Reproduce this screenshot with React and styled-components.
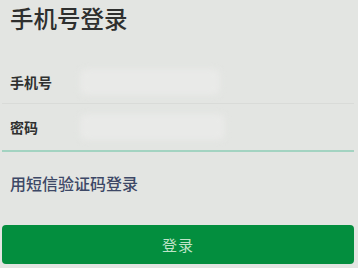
import React from 'react';
import styled, { createGlobalStyle } from 'styled-components';

const GlobalStyle = createGlobalStyle`
  html, body {
    margin: 0;
    padding: 0;
    background-color: #e3e5e2;
  }
  body {
    font-family: "Noto Sans CJK SC", "Noto Sans", sans-serif;
  }
`;

const Page = styled.div`
  width: 358px;
  height: 268px;
  box-sizing: border-box;
  padding: 0 4px 0 2px;
  background-color: #e3e5e2;
  display: flex;
  flex-direction: column;
  overflow: hidden;
`;

const Title = styled.h1`
  margin: 0;
  height: 36px;
  padding-left: 8px;
  display: flex;
  align-items: center;
  font-size: 23.5px;
  font-weight: 500;
  color: #2e2f2e;
`;

const Form = styled.div`
  margin-top: 24px;
  display: flex;
  flex-direction: column;
`;

const Row = styled.div`
  height: ${(p) => p.$height}px;
  display: flex;
  align-items: center;
  padding-left: 8px;
  border-bottom: ${(p) => (p.$active ? '2px solid #a3d3c1' : '1px solid #d9dbd8')};
  box-sizing: border-box;
`;

const Label = styled.span`
  width: 70px;
  font-size: 14px;
  font-weight: 600;
  color: #2f302f;
`;

const Masked = styled.div`
  width: ${(p) => p.$width}px;
  height: 26px;
  border-radius: 6px;
  background-color: #e9eae8;
  filter: blur(3px);
`;

const SmsLink = styled.a`
  margin-top: 20px;
  padding-left: 8px;
  font-size: 16px;
  font-weight: 500;
  color: #3d4866;
  text-decoration: none;
  line-height: 22px;
`;

const LoginButton = styled.button`
  margin-top: 31px;
  height: 39px;
  width: 100%;
  border: none;
  border-radius: 4px;
  background-color: #038e3e;
  color: #bfe3c8;
  font-family: "Noto Sans CJK SC", sans-serif;
  font-size: 15px;
  font-weight: 400;
  letter-spacing: 1px;
`;

const App = () => {
  return (
    <>
      <GlobalStyle />
      <Page>
        <Title>手机号登录</Title>
        <Form>
          <Row $height={44}>
            <Label>手机号</Label>
            <Masked $width={140} />
          </Row>
          <Row $height={48} $active>
            <Label>密码</Label>
            <Masked $width={145} />
          </Row>
        </Form>
        <SmsLink>用短信验证码登录</SmsLink>
        <LoginButton>登录</LoginButton>
      </Page>
    </>
  );
};

export default App;
